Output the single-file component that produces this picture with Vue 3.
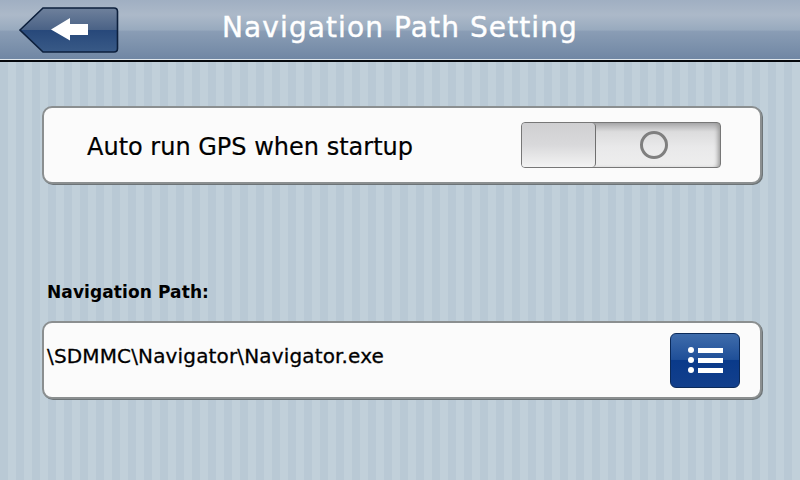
<script setup>
const title = 'Navigation Path Setting'
</script>

<template>
  <div class="screen">
    <header class="bar">
      <button class="back">
        <svg width="100" height="46" viewBox="0 0 100 46">
          <defs>
            <linearGradient id="bk" x1="0" y1="0" x2="0" y2="1">
              <stop offset="0" stop-color="#6f819c" />
              <stop offset="0.5" stop-color="#4a6286" />
              <stop offset="0.5" stop-color="#27487a" />
              <stop offset="1" stop-color="#395a87" />
            </linearGradient>
          </defs>
          <path d="M1 23 L24 1 H95 Q98.500 1 98.500 4.500 V41.500 Q98.500 45 95 45 H24 Z" fill="url(#bk)" stroke="#0c1f3c" stroke-width="1.600" />
          <path d="M32 22.500 L51 11 V17 H69 V28 H51 V33.500 Z" fill="#fff" />
        </svg>
      </button>
      <h1 class="title">{{ title }}</h1>
    </header>
    <main class="content">
      <section class="card auto">
        <span class="auto-label">Auto run GPS when startup</span>
        <div class="toggle">
          <div class="knob"></div>
          <div class="off"><span class="ring"></span></div>
        </div>
      </section>
      <div class="path-label">Navigation Path:</div>
      <section class="card path">
        <span class="path-text">\SDMMC\Navigator\Navigator.exe</span>
        <button class="list">
          <svg width="40" height="30" viewBox="0 0 40 30">
            <circle cx="6" cy="5" r="3" fill="#fff" />
            <circle cx="6" cy="15" r="3" fill="#fff" />
            <circle cx="6" cy="25" r="3" fill="#fff" />
            <rect x="13" y="3" width="25" height="5" fill="#fff" />
            <rect x="13" y="13" width="25" height="5" fill="#fff" />
            <rect x="13" y="23" width="25" height="5" fill="#fff" />
          </svg>
        </button>
      </section>
    </main>
  </div>
</template>

<style>
html, body { margin: 0; padding: 0; }
</style>

<style scoped>
.screen {
  width: 800px;
  height: 480px;
  overflow: hidden;
  font-family: "DejaVu Sans", sans-serif;
  color: #000;
  background: repeating-linear-gradient(90deg, #b9c9d5 0 8px, #c1d0da 8px 16px);
}
.bar {
  height: 60px;
  display: flex;
  border-bottom: 2px solid #05080c;
  box-shadow: inset 0 -1px 0 #dfe6ea;
  background: linear-gradient(#a0afc2 0, #acb9c9 25%, #98aabe 50%, #8a9db5 52%, #6f86a3 100%);
  position: relative;
}
.back {
  margin: 7px 0 0 19px;
  padding: 0;
  border: 0;
  background: none;
  line-height: 0;
  align-self: flex-start;
}
.title {
  position: absolute;
  left: 0;
  right: 0;
  top: 10px;
  margin: 0;
  text-align: center;
  font-size: 28px;
  line-height: 36px;
  font-weight: 400;
  color: #fff;
  letter-spacing: 1.1px;
  -webkit-text-stroke: 0.4px #fff;
}
.content {
  padding: 44px 38px 0 42px;
}
.card {
  box-sizing: border-box;
  height: 78px;
  display: flex;
  align-items: center;
  background: #fbfbfb;
  border-radius: 10px;
  border: 2px solid #8b8f90;
  box-shadow: 1px 1px 0 #6d7477;
}
.auto {
  padding-left: 43px;
  justify-content: space-between;
  padding-right: 39px;
}
.auto-label {
  font-size: 24px;
  margin-top: 3px;
  -webkit-text-stroke: 0.2px #000;
}
.toggle {
  width: 200px;
  height: 46px;
  box-sizing: border-box;
  display: flex;
  border: 1px solid #777;
  border-radius: 4px;
  overflow: hidden;
  background: linear-gradient(#a9a9ab 0, #dcdcdd 20%, #e9e9ea 55%, #eeeeee 100%);
  box-shadow: inset -4px 0 4px -2px #999;
}
.knob {
  width: 73px;
  background: linear-gradient(#cfcfd1, #d9d9db 50%, #f3f3f3);
  border-right: 1px solid #6f6f6f;
  border-radius: 0 4px 4px 0;
}
.off {
  flex: 1;
  display: flex;
  align-items: center;
  justify-content: center;
  padding-right: 8px;
}
.ring {
  width: 28px;
  height: 28px;
  box-sizing: border-box;
  border: 3px solid #7f7f7f;
  border-radius: 50%;
}
.path-label {
  margin: 97px 0 0 5px;
  font-size: 17px;
  font-weight: 700;
  line-height: 22px;
  letter-spacing: 0.1px;
}
.path {
  margin-top: 18px;
  padding: 0 20px 0 3px;
  justify-content: space-between;
}
.path-text {
  font-size: 20px;
  letter-spacing: 0.15px;
  margin-bottom: 8px;
  -webkit-text-stroke: 0.3px #000;
}
.list {
  width: 70px;
  height: 55px;
  padding: 0;
  display: flex;
  align-items: center;
  justify-content: center;
  border: 1px solid #0b2a5a;
  border-radius: 6px;
  background: linear-gradient(#3f6cab 0, #1f4f98 48%, #0a3a8a 50%, #123f8c 100%);
}
</style>
